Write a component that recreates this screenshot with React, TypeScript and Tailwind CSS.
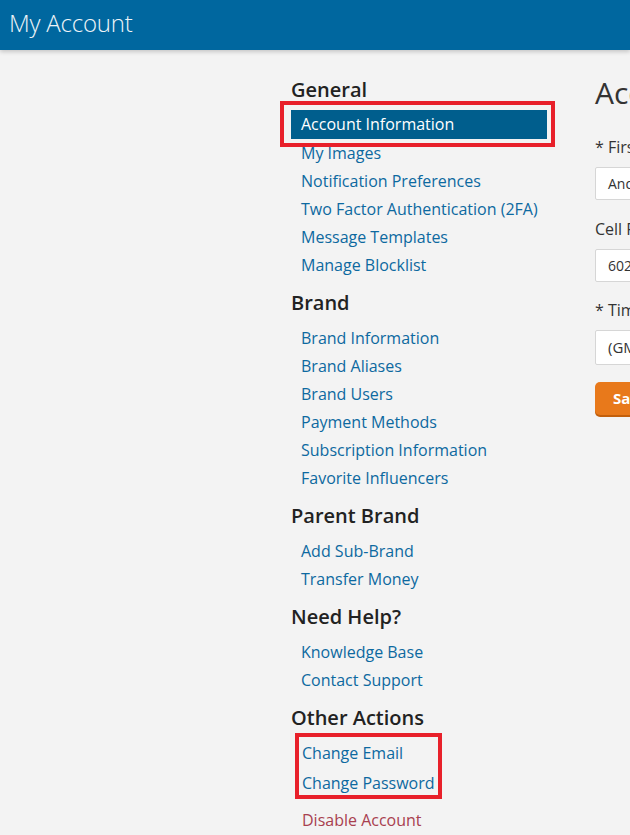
import React from "react";

const font = { fontFamily: '"Open Sans", "Liberation Sans", sans-serif' };

function Heading({ children, first }: { children: React.ReactNode; first?: boolean }) {
  return (
    <div
      className={`h-[28px] leading-[28px] text-[20px] font-semibold text-[#222222] mb-[7px] ${first ? "" : "mt-[10px]"}`}
    >
      {children}
    </div>
  );
}

function Item({ children, shifted }: { children: React.ReactNode; shifted?: boolean }) {
  return (
    <a
      className={`block h-[28px] leading-[28px] ${shifted ? "pl-[11px]" : "pl-[10px]"} text-[16px] text-[#0d69a0] cursor-pointer`}
    >
      {children}
    </a>
  );
}

export default function App() {
  return (
    <div className="min-h-[835px] w-full overflow-hidden bg-[#f3f3f3]" style={font}>
      <div className="h-[50px] bg-[#00679f] pl-[9px] flex items-center shadow-[0_2px_4px_rgba(0,0,0,0.18)] relative z-10">
        <span className="text-[24px] font-light tracking-[-0.2px] text-[#eef4f8] leading-none -mt-[4px]">
          My Account
        </span>
      </div>
      <div className="flex pt-[26px] pl-[291px]">
        <div className="w-[304px] shrink-0">
          <Heading first>General</Heading>
          <div className="w-[256px]">
            <div className="relative">
              <a className="block h-[29px] -mt-[1px] leading-[29px] pl-[10px] text-[16px] text-white bg-[#005e8d]">
                Account Information
              </a>
              <div className="absolute -left-[11px] -top-[9px] -right-[8px] -bottom-[8px] border-[4px] border-[#e8202a] pointer-events-none" />
            </div>
            <Item>My Images</Item>
            <Item>Notification Preferences</Item>
            <Item>Two Factor Authentication (2FA)</Item>
            <Item>Message Templates</Item>
            <Item>Manage Blocklist</Item>
          </div>
          <Heading>Brand</Heading>
          <Item>Brand Information</Item>
          <Item>Brand Aliases</Item>
          <Item>Brand Users</Item>
          <Item>Payment Methods</Item>
          <Item>Subscription Information</Item>
          <Item>Favorite Influencers</Item>
          <Heading>Parent Brand</Heading>
          <Item>Add Sub-Brand</Item>
          <Item>Transfer Money</Item>
          <Heading>Need Help?</Heading>
          <Item>Knowledge Base</Item>
          <Item>Contact Support</Item>
          <Heading>Other Actions</Heading>
          <div className="relative">
            <Item shifted>Change Email</Item>
            <div className="mt-[2px]">
              <Item shifted>Change Password</Item>
            </div>
            <div className="absolute left-[4px] -top-[6px] w-[147px] -bottom-[2px] border-[4px] border-[#e8202a] pointer-events-none" />
          </div>
          <a className="block mt-[9px] h-[28px] leading-[28px] pl-[11px] text-[16px] text-[#a8404f]">
            Disable Account
          </a>
        </div>
        <div className="w-[420px] shrink-0 text-[#333333]">
          <div className="text-[30px] leading-[34px] whitespace-nowrap">Account Information</div>
          <div className="mt-[26px] text-[16px] leading-[22px] mb-[9px] whitespace-nowrap">* First Name</div>
          <div className="h-[33px] bg-white border border-[#d6d6d6] rounded-[2px] flex items-center pl-[12px] text-[14px] text-[#333]">
            Andrew
          </div>
          <div className="mt-[18px] text-[16px] leading-[22px] mb-[9px] whitespace-nowrap">Cell Phone</div>
          <div className="h-[33px] bg-white border border-[#d6d6d6] rounded-[2px] flex items-center pl-[12px] text-[14px] text-[#333]">
            6025550123
          </div>
          <div className="mt-[17px] text-[16px] leading-[22px] mb-[9px] whitespace-nowrap">* Time Zone</div>
          <div className="h-[35px] bg-white border border-[#d6d6d6] rounded-[2px] flex items-center pl-[12px] text-[15px] text-[#333]">
            (GMT-07:00) Arizona
          </div>
          <button className="mt-[17px] h-[33px] px-[18px] rounded-[5px] bg-[#e8791b] text-white text-[15px] font-bold shadow-[0_2px_0_#c25f0c]">
            Save
          </button>
        </div>
      </div>
    </div>
  );
}
